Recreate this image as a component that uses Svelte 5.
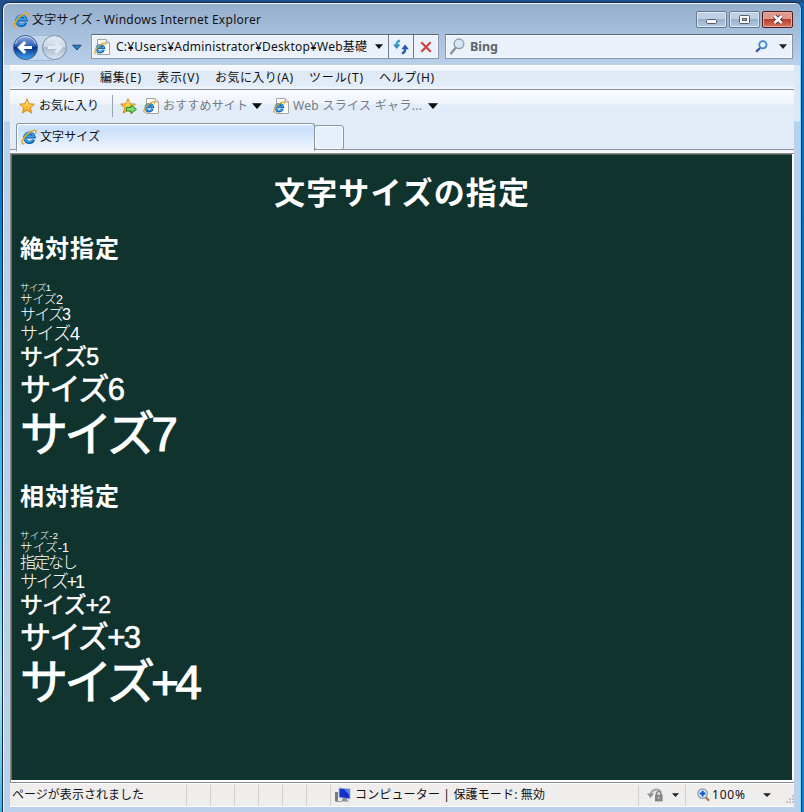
<script>
  const menus = [
    ['ファイル(F)', 64, 16],
    ['編集(E)', 41, 16],
    ['表示(V)', 42, 16],
    ['お気に入り(A)', 78, 16],
    ['ツール(T)', 54, 16],
    ['ヘルプ(H)', 55, 0],
  ];
  // text, font size, line height, run width, heavy strokes
  const absolute = [
    ['サイズ1', 9.5, 11, 31, false],
    ['サイズ2', 12.5, 13, 43, false],
    ['サイズ3', 16, 16, 51, false],
    ['サイズ4', 18, 22.5, 60, false],
    ['サイズ5', 23, 26, 79, true],
    ['サイズ6', 31, 37.5, 105, true],
    ['サイズ7', 48, 52, 158, true],
  ];
  const relative = [
    ['サイズ-2', 9.5, 11, 38, false],
    ['サイズ-1', 12.5, 13, 49, false],
    ['指定なし', 16, 16, 58, false],
    ['サイズ+1', 18, 22.5, 65, false],
    ['サイズ+2', 23, 26, 91, true],
    ['サイズ+3', 31, 37.5, 121, true],
    ['サイズ+4', 48, 52, 182, true],
  ];

  // Spreads the letters of a run so that it fills the given width.
  function fit(node, width) {
    const natural = node.getBoundingClientRect().width;
    const gaps = [...node.textContent].length - 1;
    node.style.letterSpacing = (width - natural) / gaps + 'px';
    node.style.width = width + 'px';
  }
</script>

{#snippet t(text, width, cls = '')}
  <span class="t {cls}" use:fit={width}>{text}</span>
{/snippet}

{#snippet eGlyph()}
  <path d="M12.7 10.6A4.7 4.6 0 1 1 13 7.9H5.1" fill="none" stroke="#1562b0" stroke-width="3.3" />
  <path d="M12.2 10.4A4.7 4.6 0 1 1 12.8 7.6H5.4" fill="none" stroke="#3aa6e6" stroke-width="1.5" />
  <path d="M3.3 14.3C1 15.6 0 13.8 2.2 10.2C5 5.6 11.6.2 14.3 1.3C15.4 1.8 15 3.4 14.2 4.6" fill="none" stroke="#e9a91f" stroke-width="1.5" />
{/snippet}

{#snippet ie()}
  <svg width="16" height="16" viewBox="0 0 16 16">{@render eGlyph()}</svg>
{/snippet}

{#snippet page()}
  <svg width="16" height="16" viewBox="0 0 16 16">
    <path d="M3.5.5H12L15.5 4V15.5H3.5Z" fill="#fcfcfa" stroke="#a4a49c" />
    <path d="M12 .5V4H15.5" fill="#ddd" stroke="#a4a49c" />
    <g transform="translate(0 3) scale(.76)">{@render eGlyph()}</g>
  </svg>
{/snippet}

{#snippet arrow(w, h, color)}
  <svg width={w} height={h} viewBox="0 0 10 6" preserveAspectRatio="none"><path d="M0 .3H10L5 6Z" fill={color} /></svg>
{/snippet}

{#snippet star()}
  <path d="M8 .8L10.1 5.8L15.4 6.2L11.4 9.8L12.7 15.1L8 12.2L3.3 15.1L4.6 9.8L.6 6.2L5.9 5.8Z" fill="url(#gold)" stroke="#d58a1e" stroke-width="1" stroke-linejoin="round" />
{/snippet}

{#snippet lines(rows)}
  {#each rows as [text, size, lh, width, heavy]}
    <div class="line" class:heavy style:--lh="{lh}px" style:font-size="{size}px">{@render t(text, width)}</div>
  {/each}
{/snippet}

<div class="desktop">
  <svg class="defs" width="0" height="0">
    <defs>
      <linearGradient id="gold" x1="0" y1="0" x2="0" y2="1"><stop offset="0" stop-color="#fff3a0" /><stop offset=".5" stop-color="#fbc63e" /><stop offset="1" stop-color="#f3a01c" /></linearGradient>
      <linearGradient id="back" x1="0" y1="0" x2="0" y2="1"><stop offset="0" stop-color="#8eb3e2" /><stop offset=".45" stop-color="#2a5aae" /><stop offset=".5" stop-color="#0a2f86" /><stop offset="1" stop-color="#3da8f2" /></linearGradient>
      <linearGradient id="fwd" x1="0" y1="0" x2="0" y2="1"><stop offset="0" stop-color="#e3ebf4" /><stop offset=".47" stop-color="#ccd8e6" /><stop offset=".5" stop-color="#a9bbd0" /><stop offset="1" stop-color="#d9e5f2" /></linearGradient>
    </defs>
  </svg>
  <div class="window">
    <header class="title">
      {@render ie()}
      {@render t('文字サイズ - Windows Internet Explorer', 229, 'name')}
      <div class="buttons">
        <div class="wb"><svg width="29" height="15"><rect x="9.5" y="7.5" width="10" height="4" rx="1" fill="#f7f7f7" stroke="#555d6c" /></svg></div>
        <div class="wb"><svg width="29" height="15"><rect x="9.5" y="3.5" width="10" height="8" rx="1" fill="#f7f7f7" stroke="#555d6c" /><rect x="12.5" y="6.5" width="4" height="2" fill="#9fb3cc" stroke="#555d6c" /></svg></div>
        <div class="wb close"><svg width="29" height="15"><path d="M11.5 4.2L18.5 10.8M18.5 4.2L11.5 10.8" stroke="#55323a" stroke-width="4.6" /><path d="M11.3 4L18.7 11M18.7 4L11.3 11" stroke="#fafafa" stroke-width="2.6" /></svg></div>
      </div>
    </header>

    <div class="nav">
      <svg class="travel" width="70" height="28" viewBox="0 0 70 28">
        <path d="M14 1.5H42V26.5H14Z" fill="#c4d6ec" />
        <path d="M14 1.5H42M14 26.5H42" stroke="#a4bad6" />
        <circle cx="13.5" cy="13.5" r="12" fill="url(#back)" stroke="#3f5f93" />
        <path d="M3.5 10A10.5 10.5 0 0 1 23.5 10" fill="none" stroke="#c9daf0" stroke-width="1" />
        <path d="M20 13.5H8.5M13.2 8.1L7.6 13.5L13.2 18.9" fill="none" stroke="#fff" stroke-width="3.2" />
        <circle cx="42.5" cy="13.5" r="12" fill="url(#fwd)" stroke="#7e8fa8" />
        <path d="M36 13.5H48M43.4 8.3L48.8 13.5L43.4 18.7" fill="none" stroke="#e2eaf3" stroke-width="3" />
      </svg>
      <svg class="history" width="10" height="7" viewBox="0 0 10 7"><path d="M.6 1.2H9.2L5 6Z" fill="#2b86bd" stroke="#174e80" stroke-width="1" /></svg>
      <div class="box address">
        {@render page()}
        {@render t('C:¥Users¥Administrator¥Desktop¥Web基礎', 251, 'url')}
        {@render arrow(8, 5, '#111')}
        <div class="cell">
          <svg width="16" height="16" viewBox="0 0 16 16">
            <path d="M7 1.8C4 2 3.6 4 3.6 6.5" fill="none" stroke="#3aa0d8" stroke-width="2.4" />
            <path d="M0 5.6H7.4L3.7 10Z" fill="#2989cc" />
            <path d="M8.8 14.2C11.8 14 12.2 12 12.2 9.8" fill="none" stroke="#2961b3" stroke-width="2.4" />
            <path d="M8.4 10.2H15.8L12.1 5.6Z" fill="#2558a8" />
          </svg>
        </div>
        <div class="cell x">
          <svg width="12" height="12" viewBox="0 0 12 12"><path d="M1.2 1.2L10.8 10.8M10.6 1.2L1.4 10.8" stroke="#cf4444" stroke-width="2.3" /></svg>
        </div>
      </div>
      <div class="box search">
        <svg width="15" height="17" viewBox="0 0 15 17"><path d="M5.8 9.6L1.2 15.2" stroke="#8a9098" stroke-width="2.4" stroke-linecap="round" /><circle cx="9" cy="5.8" r="4.8" fill="#d5e7f5" stroke="#929fae" stroke-width="1.4" /></svg>
        {@render t('Bing', 28, 'bing')}
        <svg class="find" width="13" height="13" viewBox="0 0 13 13"><path d="M5 8L1.2 11.8" stroke="#3d4ba4" stroke-width="2.3" /><circle cx="7.9" cy="4.7" r="3.6" fill="#eef6fd" stroke="#3d86cd" stroke-width="1.8" /></svg>
        {@render arrow(8, 5, '#222')}
      </div>
    </div>

    <div class="inner">
      <div class="menu">
        {#each menus as [label, width, gap]}
          <span class="m" style:margin-right="{gap}px">{@render t(label, width)}</span>
        {/each}
      </div>

      <div class="favs">
        <svg width="16" height="16" viewBox="0 0 16 16">{@render star()}</svg>
        {@render t('お気に入り', 60, 'fav')}
        <i class="sep"></i>
        <svg width="17" height="16" viewBox="0 0 17 16">{@render star()}<path d="M6.5 9.5H11V7L16.4 11.3L11 15.5V13H6.5Z" fill="#86dc68" stroke="#238b2c" /></svg>
        <span class="site">{@render page()}{@render t('おすすめサイト', 85, 'dim')}{@render arrow(10, 6, '#000')}</span>
        <span class="site second">{@render page()}{@render t('Web スライス ギャラ...', 129, 'dim')}{@render arrow(10, 6, '#000')}</span>
      </div>

      <div class="tabs">
        <div class="tab">{@render ie()}{@render t('文字サイズ', 60)}</div>
        <div class="newtab"></div>
      </div>

      <div class="view">
        <main>
          <h1>{@render t('文字サイズの指定', 255)}</h1>
          <h2>{@render t('絶対指定', 99)}</h2>
          {@render lines(absolute)}
          <h2>{@render t('相対指定', 99)}</h2>
          {@render lines(relative)}
        </main>
      </div>

      <footer>
        <div class="msg">{@render t('ページが表示されました', 132)}</div>
        {#each Array(6) as _}<div class="slot"></div>{/each}
        <div class="zone">
          <svg width="16" height="16" viewBox="0 0 16 16">
            <rect x="0" y="5" width="3" height="9" fill="#777c80" /><path d="M.5 14.5H6" stroke="#999" />
            <path d="M4 1L15 2V12L4 10.5Z" fill="#1732c4" stroke="#b9c3d8" stroke-width=".8" /><path d="M9 2L14.5 2.4V8Z" fill="#5d8cf0" />
            <path d="M8 11L12 11.5V13L14.5 14.5H6Z" fill="#8d9298" />
          </svg>
          {@render t('コンピューター | 保護モード: 無効', 190)}
        </div>
        <div class="privacy">
          <svg width="17" height="16" viewBox="0 0 17 16">
            <path d="M3.8 7.5A5.6 5.6 0 0 1 14 5" fill="#e6e6e6" stroke="#a4a4a4" stroke-width="2" /><path d="M0 6.5H7L3.5 11Z" fill="#8e8e8e" />
            <path d="M9.5 8V6.4A2.3 2.3 0 0 1 14 6.4V8" fill="none" stroke="#777" stroke-width="1.4" /><rect x="8" y="7.6" width="7.6" height="6.8" fill="#858585" /><path d="M11.8 9.5V12" stroke="#ddd" />
          </svg>
          {@render arrow(7, 4, '#222')}
        </div>
        <div class="zoom">
          <svg width="13" height="14" viewBox="0 0 13 14"><path d="M8.5 9L12 12.8" stroke="#a87b55" stroke-width="2.3" /><circle cx="5.6" cy="5.6" r="4.8" fill="#cfe7fb" stroke="#8d9dad" stroke-width="1.2" /><path d="M2.7 5.6H8.5M5.6 2.7V8.5" stroke="#1555c0" stroke-width="2" /></svg>
          {@render t('100%', 33)}
          {@render arrow(8, 4, '#222')}
          <svg class="grip" width="9" height="9"><path d="M7 1h2M4 4h2M7 4h2M1 7h2M4 7h2M7 7h2" stroke="#b9b5b5" stroke-width="1.5" /></svg>
        </div>
      </footer>
    </div>
  </div>
</div>

<style>
  :global(body) { margin: 0; }
  .desktop {
    box-sizing: border-box; width: 804px; height: 812px; overflow: hidden;
    padding: 2px 2px 0 2px; position: relative;
    background: linear-gradient(#204f8c, #204f8c) 0 0 / 804px 3px no-repeat, linear-gradient(#0867c6, #0f7fe0) 100% 0 / 402px 812px no-repeat, linear-gradient(#204f8c 0, #0b5cae 30px, #0877d8 200px, #27aef0 400px, #63cdf5 560px, #9ee4f5 690px, #3cb4ea 812px);
    font: 12px/16px "Noto Sans", "Noto Sans CJK JP", sans-serif; color: #111;
  }
  .defs { position: absolute; }
  svg { display: block; flex: none; }
  .t { display: inline-block; white-space: pre; flex: none; }
  .window {
    box-sizing: border-box; height: 814px; width: 800px; padding: 0 6px 0 7px;
    border: 1px solid #1b2a3c; border-radius: 7px 7px 0 0;
    box-shadow: inset 1px 1px 0 #eef5fc, inset -1px 0 0 #7fdcf2;
    background: linear-gradient(#94aecd 0, #b9d0ea 62px, #dce8f5 62px, #dce8f5 118px, #b9d1eb 119px);
  }
  .title { display: flex; height: 28px; align-items: center; padding: 5px 0 0 3px; box-sizing: border-box; }
  .title .name { margin-left: 3px; }
  .buttons { display: flex; gap: 2px; margin-left: auto; padding-right: 2px; }
  .wb {
    width: 29px; height: 15px; border: 1px solid #66788f; border-radius: 2px;
    box-shadow: inset 0 0 0 1px #dce8f5; background: linear-gradient(#bfd0e4 47%, #96afcb 50%, #b5cbe3);
  }
  .wb.close { border-color: #501c20; box-shadow: inset 0 0 0 1px #e6aaa2; background: linear-gradient(#dd998e 45%, #b83d2b 50%, #d77860); }
  .nav { display: flex; height: 34px; box-sizing: border-box; padding: 3px 0 0 2px; align-items: flex-start; }
  .travel { margin-right: -11px; }
  .history { margin: 10px 9px 0 1px; }
  .box {
    display: flex; align-items: center; box-sizing: border-box; height: 25px;
    border: 1px solid #8796a8; border-top-color: #586675; border-radius: 1px; background: #eaf1fa;
    box-shadow: inset 0 0 0 1px #f8fbfe;
  }
  .address { width: 348px; padding-left: 2px; }
  .url { margin: 0 8px 0 6px; }
  .cell { display: flex; align-items: center; justify-content: center; width: 24px; height: 23px; border-left: 1px solid #6c7b8c; margin-left: 5px; }
  .cell.x { margin-left: 0; }
  .search { width: 348px; margin-left: 6px; padding: 0 5px 0 4px; }
  .bing { font-size: 12.5px; font-weight: 700; color: #5f646b; margin-left: 5px; }
  .find { margin: 0 11px 0 auto; }
  .inner { width: 784px; }
  .menu {
    display: flex; box-sizing: border-box; height: 25px; padding: 4px 0 0 10px;
    border-top: 1px solid #fff; border-bottom: 1px solid #848d9b;
    background: linear-gradient(#f6f9fe 0, #edf3fb 5px, #dfe9f6 5px, #e2edf9 20px, #f5f9fe 23px);
  }
  .favs {
    display: flex; align-items: center; box-sizing: border-box; height: 32px; padding: 0 0 0 9px;
    background: linear-gradient(#fafcff 0, #edf3fb 14px, #e1ecf8 15px);
  }
  .fav { margin-left: 4px; }
  .sep { width: 1px; height: 22px; background: #9ba4ae; margin: 0 7px 0 13px; }
  .site { display: flex; align-items: center; margin-left: 6px; }
  .site.second { margin-left: 11px; }
  .dim { color: #767c84; margin: 0 4px; }
  .second .dim { margin: 0 6px 0 4px; }
  .tabs {
    display: flex; align-items: flex-end; box-sizing: border-box; height: 31px; padding-left: 6px;
    background: linear-gradient(#e1ecf8 0, #e1ecf8 27px, #8b95a2 27px, #8b95a2 28px, #f4f6f9 28px);
  }
  .tab {
    display: flex; align-items: center; gap: 3px; box-sizing: border-box; width: 299px; height: 30px;
    padding: 0 0 3px 4px; border: 1px solid #8b95a2; border-bottom: 0; border-radius: 3px 3px 0 0;
    background: linear-gradient(#d3e4fc 2px, #c9dffb 5px, #edf3fc 24px, #f4f6f9);
    box-shadow: inset 1px 1px 0 #fff; clip-path: inset(0 0 2px 0);
  }
  .newtab { box-sizing: border-box; width: 30px; height: 25px; margin: 0 0 3px -1px; border: 1px solid #8b95a2; border-radius: 3px; background: #e6effa; box-shadow: inset 0 0 0 1px #f7faff; }
  .view { box-sizing: border-box; height: 630px; background: #fff; border: 1px solid #8a8a86; border-width: 1px 0 1px 1px; padding: 0 2px 2px 0; }
  main {
    box-sizing: border-box; height: 626px; width: 781px; padding: 2px 0 0 8px; overflow: hidden;
    border-left: 1px solid #5f6966; border-top: 1px solid #4c5a57;
    background: #10332d; color: #fff; font-family: "Liberation Sans", "Noto Sans CJK JP", sans-serif;
  }
  h1, h2 { margin: 0; font-weight: 700; font-family: "Noto Sans CJK JP", sans-serif; }
  h1 { font-size: 31px; line-height: 40px; height: 40px; padding: 14px 0 0 254px; }
  h2 { font-size: 24px; line-height: 30px; height: 30px; margin: 21px 0 19px; }
  .line { display: flex; height: var(--lh); white-space: nowrap; font-weight: 300; }
  .line :global(.t) { line-height: calc(var(--lh) + .18em + 1px); }
  .line.heavy { font-weight: 400; -webkit-text-stroke: .02em #fff; }
  .heavy :global(.t) { line-height: calc(var(--lh) + .07em); }
  footer { display: flex; height: 22px; background: #f0eded; border-top: 1px solid #fff; border-bottom: 1px solid #fff; line-height: 22px; align-items: center; }
  .msg { width: 174px; padding-left: 2px; }
  .slot { width: 23px; height: 21px; border-left: 1px solid #d3d0d0; }
  .zone, .privacy, .zoom { display: flex; align-items: center; box-sizing: border-box; height: 21px; border-left: 1px solid #d3d0d0; }
  .zone { width: 308px; padding-left: 4px; gap: 4px; }
  .privacy { width: 47px; padding-left: 8px; gap: 8px; }
  .zoom { flex: 1; padding-left: 11px; }
  .zoom :global(.t) { margin: 0 18px 0 2px; }
  .grip { margin: 8px 0 0 auto; }
</style>
